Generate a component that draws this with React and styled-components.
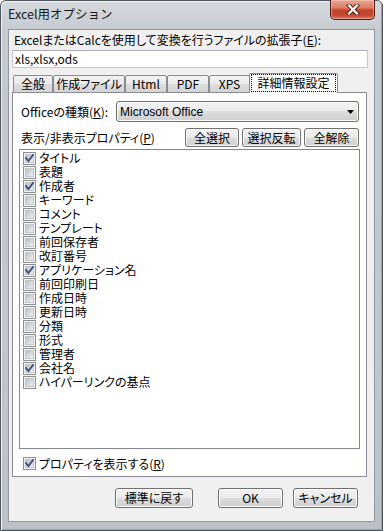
import React from "react";
import styled, { createGlobalStyle } from "styled-components";

const GlobalStyle = createGlobalStyle`
  html, body { margin: 0; padding: 0; background: #ffffff; }
  body {
    font-family: "Noto Sans CJK JP", "Liberation Sans", sans-serif;
    font-size: 12px;
    color: #000;
  }
  * { box-sizing: border-box; }
`;

const Window = styled.div`
  width: 383px;
  height: 531px;
  display: flex;
  flex-direction: column;
  background: linear-gradient(to bottom, #d6dadf 0px, #c6cbd1 28px, #c2c7cd 60%, #bcc1c7 100%);
  border: 1px solid #51575e;
  border-radius: 6px 6px 0 0;
  padding: 0 7px 8px 7px;
  box-shadow: inset 1px 1px 0 #eceef0, inset -1px -1px 0 #9a9fa5;
`;

const TitleBar = styled.div`
  height: 28px;
  display: flex;
  align-items: flex-start;
  justify-content: space-between;
`;

const Title = styled.div`
  padding-top: 5px;
  font-size: 12.5px;
  line-height: 16px;
  color: #1a1a1a;
`;

const CloseButton = styled.div`
  width: 45px;
  height: 20px;
  margin-top: -1px;
  border: 1px solid #4e1810;
  border-top: none;
  border-radius: 0 0 5px 5px;
  background: linear-gradient(to bottom, #e8a796 0%, #dc7d67 40%, #c4412a 55%, #c24a33 80%, #d9765c 100%);
  box-shadow: inset 0 0 0 1px rgba(255, 210, 200, 0.45);
  display: flex;
  align-items: center;
  justify-content: center;
`;

const Client = styled.div`
  flex: 1;
  display: flex;
  flex-direction: column;
  background: #f0f0f0;
  border: 1px solid #8f979f;
  padding: 3px 0 0 3px;
`;

const FieldLabel = styled.div`
  line-height: 14px;
  height: 14px;
  padding-left: 2px;
  font-feature-settings: "palt";
  white-space: nowrap;
`;

const TextInput = styled.div`
  margin-top: 3px;
  width: 356px;
  height: 18px;
  background: #fff;
  border: 1px solid #c5c9cf;
  border-top-color: #abadb3;
  padding-left: 2px;
  line-height: 16px;
  font-feature-settings: "palt";
`;

const TabStrip = styled.div`
  margin-top: 5px;
  height: 20px;
  margin-bottom: -1px;
  padding-left: 1px;
  display: flex;
  align-items: flex-end;
`;

const Tab = styled.div`
  position: relative;
  width: ${(p) => p.$w}px;
  height: ${(p) => (p.$active ? 20 : 18)}px;
  margin-left: ${(p) => (p.$active ? -1 : 0)}px;
  z-index: ${(p) => (p.$active ? 2 : 1)};
  border: 1px solid #898c95;
  border-bottom: ${(p) => (p.$active ? "none" : "1px solid #898c95")};
  border-radius: 2px 2px 0 0;
  background: ${(p) =>
    p.$active
      ? "#ffffff"
      : "linear-gradient(to bottom, #f3f3f3 0%, #ebebeb 50%, #dddddd 50%, #d4d4d4 100%)"};
  display: flex;
  padding: ${(p) => (p.$active ? "0 1px 1px 1px" : "0")};
`;

const TabLabel = styled.div`
  flex: 1;
  display: flex;
  align-items: center;
  justify-content: center;
  line-height: 14px;
  font-feature-settings: "palt";
  white-space: nowrap;
  border: 1px dotted ${(p) => (p.$focus ? "#000" : "transparent")};
`;

const Panel = styled.div`
  width: 355px;
  height: 385px;
  background: #ffffff;
  border: 1px solid #898c95;
  padding: 8px 7px 0 6px;
  display: flex;
  flex-direction: column;
`;

const Row = styled.div`
  display: flex;
  align-items: center;
  height: ${(p) => p.$h}px;
  margin-top: ${(p) => p.$mt || 0}px;
  padding-left: 2px;
`;

const Label = styled.div`
  line-height: 14px;
  white-space: nowrap;
  font-feature-settings: "palt";
`;

const Combo = styled.div`
  margin-left: auto;
  width: 243px;
  height: 21px;
  border: 1px solid #707070;
  border-radius: 3px;
  background: linear-gradient(to bottom, #f2f2f2 0%, #ebebeb 50%, #dddddd 50%, #cfcfcf 100%);
  box-shadow: inset 0 0 0 1px #fbfbfb;
  display: flex;
  align-items: center;
  justify-content: space-between;
  padding: 0 4px 0 3px;
  line-height: 14px;
  font-family: "Liberation Sans", "Noto Sans CJK JP", sans-serif;
`;

const ButtonGroup = styled.div`
  margin-left: auto;
  display: flex;
  gap: 3px;
`;

const Button = styled.div`
  width: ${(p) => p.$w}px;
  height: ${(p) => p.$h || 19}px;
  margin-right: ${(p) => p.$mr || 0}px;
  border: 1px solid #707070;
  border-radius: 3px;
  background: linear-gradient(to bottom, #f2f2f2 0%, #ebebeb 50%, #dddddd 50%, #cfcfcf 100%);
  box-shadow: inset 0 0 0 1px #fcfcfc;
  display: flex;
  align-items: center;
  justify-content: center;
  line-height: 14px;
  font-feature-settings: "palt";
  white-space: nowrap;
`;

const ListBox = styled.div`
  margin-top: 2px;
  width: 341px;
  height: 300px;
  border: 1px solid #828790;
  background: #fff;
  padding: 1px 0 0 3px;
  display: flex;
  flex-direction: column;
`;

const Item = styled.div`
  display: flex;
  align-items: center;
  gap: 3px;
  height: 14px;
  line-height: 14px;
  white-space: nowrap;
  font-feature-settings: "palt";
`;

const CheckRow = styled.div`
  display: flex;
  align-items: center;
  gap: 3px;
  height: 15px;
  margin-top: 7px;
  padding-left: 4px;
  line-height: 14px;
  white-space: nowrap;
  font-feature-settings: "palt";
`;

const Footer = styled.div`
  margin-top: 11px;
  display: flex;
  justify-content: flex-end;
  padding-right: 16px;
  gap: 10px;
`;

const CheckBox = ({ checked }) => (
  <svg width="13" height="13" viewBox="0 0 13 13" style={{ flex: "none" }}>
    <defs>
      <linearGradient id="cbInner" x1="0" y1="0" x2="1" y2="1">
        <stop offset="0" stopColor="#b9bdc3" />
        <stop offset="1" stopColor="#f2f2f3" />
      </linearGradient>
    </defs>
    <rect x="0.5" y="0.5" width="12" height="12" fill="#f4f4f4" stroke="#8e8f8f" />
    <rect x="2.5" y="2.5" width="8" height="8" fill="url(#cbInner)" stroke="#c3c6cb" />
    {checked && (
      <path d="M3 6.2 L5.4 9 L10 3" fill="none" stroke="#3b4f86" strokeWidth="1.9" strokeLinecap="square" />
    )}
  </svg>
);

const ComboArrow = () => (
  <svg width="7" height="4" viewBox="0 0 7 4">
    <path d="M0 0 H7 L3.5 4 Z" fill="#000" />
  </svg>
);

const CloseGlyph = () => (
  <svg width="14" height="11" viewBox="0 0 14 11">
    <path d="M3 1.5 L11 9.5 M11 1.5 L3 9.5" stroke="#5a1a10" strokeWidth="4" strokeLinecap="square" />
    <path d="M3 1.5 L11 9.5 M11 1.5 L3 9.5" stroke="#ffffff" strokeWidth="2.2" strokeLinecap="square" />
  </svg>
);

const tabs = [
  { label: "全般", w: 40 },
  { label: "作成ファイル", w: 72 },
  { label: "Html", w: 42 },
  { label: "PDF", w: 42 },
  { label: "XPS", w: 41 },
  { label: "詳細情報設定", w: 89, active: true },
];

const items = [
  ["タイトル", true],
  ["表題", false],
  ["作成者", true],
  ["キーワード", false],
  ["コメント", false],
  ["テンプレート", false],
  ["前回保存者", false],
  ["改訂番号", false],
  ["アプリケーション名", true],
  ["前回印刷日", false],
  ["作成日時", false],
  ["更新日時", false],
  ["分類", false],
  ["形式", false],
  ["管理者", false],
  ["会社名", true],
  ["ハイパーリンクの基点", false],
];

export default function App() {
  return (
    <>
      <GlobalStyle />
      <Window>
        <TitleBar>
          <Title>Excel用オプション</Title>
          <CloseButton>
            <CloseGlyph />
          </CloseButton>
        </TitleBar>
        <Client>
          <FieldLabel>
            ExcelまたはCalcを使用して変換を行うファイルの拡張子(<u>E</u>):
          </FieldLabel>
          <TextInput>xls,xlsx,ods</TextInput>
          <TabStrip>
            {tabs.map((t) => (
              <Tab key={t.label} $w={t.w} $active={t.active}>
                <TabLabel $focus={t.active}>{t.label}</TabLabel>
              </Tab>
            ))}
          </TabStrip>
          <Panel>
            <Row $h={21}>
              <Label>
                Officeの種類(<u>K</u>):
              </Label>
              <Combo>
                <span>Microsoft Office</span>
                <ComboArrow />
              </Combo>
            </Row>
            <Row $h={19} $mt={6}>
              <Label>
                表示/非表示プロパティ(<u>P</u>)
              </Label>
              <ButtonGroup>
                <Button $w={54}>全選択</Button>
                <Button $w={59}>選択反転</Button>
                <Button $w={55}>全解除</Button>
              </ButtonGroup>
            </Row>
            <ListBox>
              {items.map(([name, checked]) => (
                <Item key={name}>
                  <CheckBox checked={checked} />
                  <span>{name}</span>
                </Item>
              ))}
            </ListBox>
            <CheckRow>
              <CheckBox checked />
              <span>
                プロパティを表示する(<u>R</u>)
              </span>
            </CheckRow>
          </Panel>
          <Footer>
            <Button $w={78} $h={20} $mr={15}>標準に戻す</Button>
            <Button $w={65} $h={20}>OK</Button>
            <Button $w={65} $h={20}>キャンセル</Button>
          </Footer>
        </Client>
      </Window>
    </>
  );
}
